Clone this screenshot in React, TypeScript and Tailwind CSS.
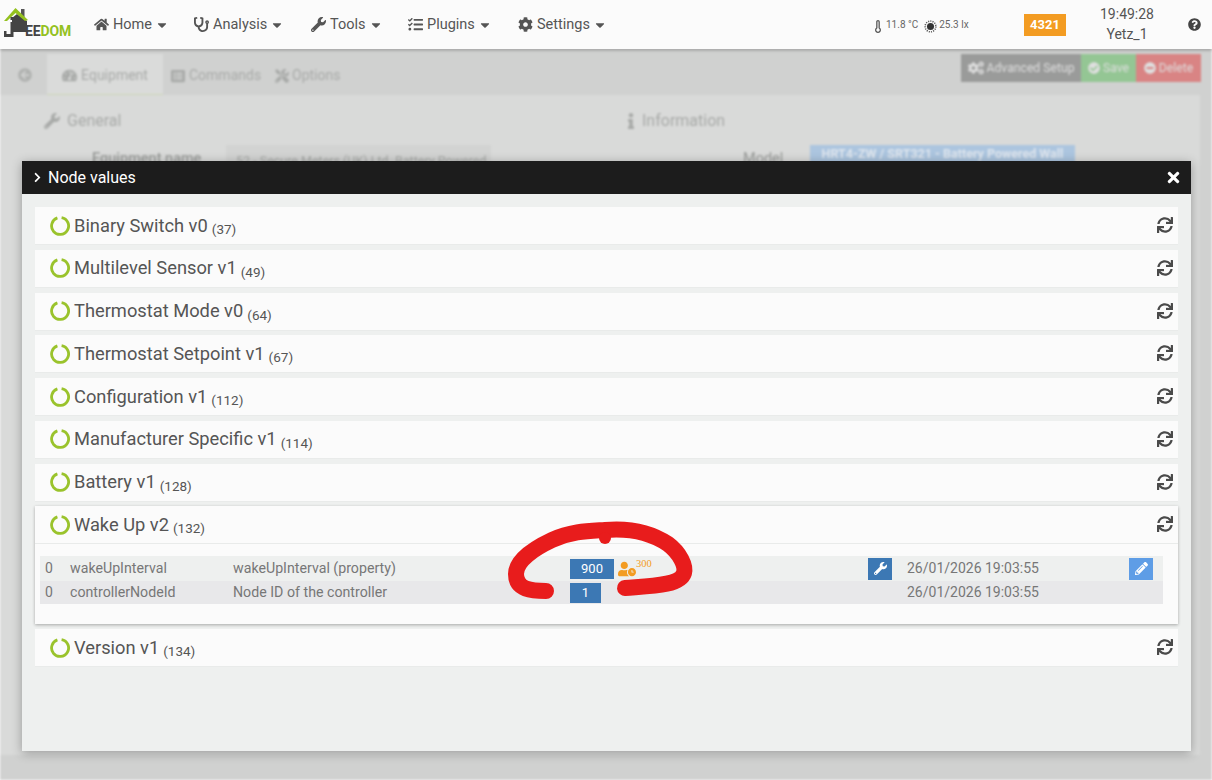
import {
  FaArrowCircleLeft,
  FaCaretDown,
  FaCheckCircle,
  FaChevronRight,
  FaCog,
  FaCogs,
  FaHome,
  FaInfo,
  FaListAlt,
  FaMinusCircle,
  FaPencilAlt,
  FaQuestionCircle,
  FaStethoscope,
  FaSync,
  FaTachometerAlt,
  FaTasks,
  FaTimes,
  FaTools,
  FaUserClock,
  FaWrench,
} from "react-icons/fa";
import { Thermometer } from "lucide-react";
import type { ComponentType, ReactNode } from "react";

const menu: { label: string; icon: ComponentType<{ className?: string }>; width: string }[] = [
  { label: "Home", icon: FaHome, width: "w-[100px]" },
  { label: "Analysis", icon: FaStethoscope, width: "w-[117px]" },
  { label: "Tools", icon: FaWrench, width: "w-[97px]" },
  { label: "Plugins", icon: FaTasks, width: "w-[110px]" },
  { label: "Settings", icon: FaCog, width: "w-[100px]" },
];

function Logo() {
  return (
    <div className="relative w-[76px] h-[40px] shrink-0">
      <svg viewBox="0 0 76 40" className="absolute -left-[5px] -top-[4px] w-[76px] h-[40px]">
        <path d="M21 8 H24.5 V17 L21 14 Z" fill="#555" />
        <path d="M12 17 L17 13 L27 20 V31 H12 Z" fill="#444" />
        <path d="M4 20 L15.5 7 L28 19 L25 20 L15.5 12 L7 20 Z" fill="#94c11f" />
        <path d="M10.5 21 H13.5 V36 H4 V30 H6.5 V33 H10.5 Z" fill="#444" />
        <rect x="10.5" y="16" width="3" height="3" fill="#444" />
      </svg>
      <span className="absolute left-[20px] top-[18px] text-[14px] leading-[16px] font-bold tracking-[-0.1px] text-[#444]">
        EE<span className="text-[#94c11f]">DOM</span>
      </span>
    </div>
  );
}

function Navbar() {
  return (
    <nav className="relative z-20 h-[49px] bg-[#fbfbfb] shadow-[0_1px_3px_rgba(0,0,0,0.35)] flex items-center pl-[5px] text-[#555]">
      <Logo />
      <ul className="flex items-center ml-[13px]">
        {menu.map(({ label, icon: Icon, width }) => (
          <li key={label} className={`flex items-center text-[14.5px] ${width}`}>
            <Icon className="text-[15px] mr-[4px] text-[#555]" />
            <span>{label}</span>
            <FaCaretDown className="text-[14px] ml-[3px]" />
          </li>
        ))}
      </ul>
      <div className="ml-[253px] flex items-center text-[10px] text-[#666] w-[153px]">
        <Thermometer className="w-[14px] h-[17px] mt-[4px] text-[#555]" strokeWidth={2.2} />
        <span className="ml-[1px] mr-[6px] -mt-[1px]">11.8 °C</span>
        <svg viewBox="0 0 14 14" className="w-[13px] h-[13px] mt-[3px] mr-[2px]">
          <circle cx="7" cy="7" r="3.8" fill="#333" />
          <circle cx="7" cy="7" r="5.8" fill="none" stroke="#555" strokeWidth="1.6" strokeDasharray="1.2 1.2" />
        </svg>
        <span className="-mt-[1px]">25.3 lx</span>
      </div>
      <div className="w-[42px] h-[22px] bg-[#f39c22] text-white text-[13px] font-bold flex items-center justify-center">
        4321
      </div>
      <div className="w-[122px] flex flex-col items-center text-[14px] leading-[20px] text-[#555] -mt-[1px]">
        <span>19:49:28</span>
        <span>Yetz_1</span>
      </div>
      <FaQuestionCircle className="text-[13px] text-[#444] -mt-[1px]" />
    </nav>
  );
}

function TopButton({ className, children }: { className: string; children: ReactNode }) {
  return (
    <div className={`h-[28px] flex items-center justify-center gap-[3px] text-[12.2px] text-[#dfdfdf] ${className}`}>
      {children}
    </div>
  );
}

function BlurredPage() {
  return (
    <div className="h-[731px] bg-[#d0d1d0] blur-[1.2px] text-[#a8aaa8] overflow-hidden">
      <div className="h-[46px] flex items-start relative">
        <div className="flex items-end h-[46px]">
          <div className="w-[47px] h-[41px] flex items-center justify-center">
            <FaArrowCircleLeft className="text-[14px] text-[#b0b2b0] ml-[2px]" />
          </div>
          <div className="w-[116px] h-[41px] pt-[2px] bg-[#dadbda] border-b border-[#cdd6b8] flex items-center justify-center gap-[4px] text-[14px]">
            <FaTachometerAlt className="text-[15px] text-[#a8aaa8]" /> Equipment
          </div>
          <div className="h-[41px] pt-[2px] flex items-center gap-[4px] pl-[8px] text-[14px] w-[112px]">
            <FaListAlt className="text-[14px]" /> Commands
          </div>
          <div className="h-[41px] pt-[2px] flex items-center gap-[3px] text-[14px]">
            <FaTools className="text-[14px]" /> Options
          </div>
        </div>
        <div className="ml-auto mr-[11px] mt-[5px] flex">
          <TopButton className="w-[120px] bg-[#9a9b9a]">
            <FaCogs className="text-[16px]" /> Advanced Setup
          </TopButton>
          <TopButton className="w-[55px] bg-[#94c694]">
            <FaCheckCircle className="text-[12px]" /> Save
          </TopButton>
          <TopButton className="w-[65px] bg-[#d98484]">
            <FaMinusCircle className="text-[12px]" /> Delete
          </TopButton>
        </div>
      </div>
      <div className="mr-[12px] h-[660px] bg-[#d9dad9] flex">
        <div className="w-[623px] pl-[44px] pt-[15px]">
          <div className="flex items-center gap-[7px] text-[16px] leading-[22px]">
            <FaWrench className="text-[16px]" /> General
          </div>
          <div className="flex items-start mt-[13px]">
            <span className="w-[182px] pl-[48px] pt-[4px] text-[14.5px] leading-[20px] font-medium text-[#9a9c9a]">Equipment name</span>
            <div className="w-[265px] h-[32px] bg-[#d2d3d2] pl-[10px] flex items-center text-[12.5px] truncate">
              52 - Secure Meters (UK) Ltd. Battery Powered
            </div>
          </div>
        </div>
        <div className="pt-[15px]">
          <div className="flex items-center gap-[3px] text-[16px] leading-[22px]">
            <FaInfo className="text-[16px]" /> Information
          </div>
          <div className="flex items-start mt-[13px] ml-[120px]">
            <span className="w-[67px] pt-[4px] text-[14.5px] leading-[20px] text-[#9a9c9a]">Model</span>
            <div className="w-[265px] h-[32px] pt-[1px] bg-[#acc5df] text-center text-[12.5px] leading-[16px] font-bold text-[#dfe6ee]">
              HRT4-ZW / SRT321 - Battery Powered Wall
            </div>
          </div>
        </div>
      </div>
    </div>
  );
}

function Ring() {
  return (
    <svg viewBox="0 0 20 20" className="w-[20px] h-[20px] shrink-0">
      <path
        d="M11.6 1.6 A8.5 8.5 0 1 1 7.4 1.9"
        fill="none"
        stroke="#9ac32c"
        strokeWidth="2.8"
      />
    </svg>
  );
}

function SectionHead({ title, id }: { title: string; id: number }) {
  return (
    <div className="h-[38px] bg-[#fbfbfb] border-b border-[#e9ebea] flex items-center pl-[15px] pr-[5px] text-[#555]">
      <Ring />
      <span className="ml-[4px] text-[18.3px] leading-[24px]">{title}</span>
      <span className="ml-[4px] text-[13.5px] leading-[18px] mt-[7px]">({id})</span>
      <FaSync className="ml-auto text-[16px] text-[#4a4a4a] -mt-[1px]" />
    </div>
  );
}

function ValueRow({
  name,
  desc,
  value,
  boxWidth,
  rowClass,
  extra,
  wrench,
  pencil,
}: {
  name: string;
  desc: string;
  value: string;
  boxWidth: string;
  rowClass: string;
  extra?: ReactNode;
  wrench?: boolean;
  pencil?: boolean;
}) {
  return (
    <div className={`grid grid-cols-[25px_163px_337px_298px_39px_222px_24px] items-center text-[14px] text-[#777] pl-[5px] ${rowClass}`}>
      <span>0</span>
      <span className="text-[14.2px]">{name}</span>
      <span className="text-[14.2px]">{desc}</span>
      <div className="flex items-center">
        <span className={`h-[20px] ${boxWidth} bg-[#3c78b4] text-white text-[13px] flex items-center justify-center`}>
          {value}
        </span>
        {extra}
      </div>
      <div>
        {wrench && (
          <span className="w-[24px] h-[22px] bg-[#3c78b4] text-white flex items-center justify-center">
            <FaWrench className="text-[13px]" />
          </span>
        )}
      </div>
      <span>26/01/2026 19:03:55</span>
      <div>
        {pencil && (
          <span className="w-[24px] h-[22px] bg-[#5e9de6] text-white flex items-center justify-center">
            <FaPencilAlt className="text-[13px]" />
          </span>
        )}
      </div>
    </div>
  );
}

const sections = [
  { title: "Binary Switch v0", id: 37 },
  { title: "Multilevel Sensor v1", id: 49 },
  { title: "Thermostat Mode v0", id: 64 },
  { title: "Thermostat Setpoint v1", id: 67 },
  { title: "Configuration v1", id: 112 },
  { title: "Manufacturer Specific v1", id: 114 },
  { title: "Battery v1", id: 128 },
];

function Dialog() {
  return (
    <div className="absolute z-10 left-[22px] top-[161px] w-[1169px] h-[590px] bg-[#eef0ef] shadow-[0_2px_10px_rgba(0,0,0,0.3)]">
      <div className="h-[33px] bg-[#1c1c1c] text-white flex items-center pl-[10px] pr-[9px]">
        <FaChevronRight className="text-[11px]" />
        <span className="ml-[5px] text-[16px]">Node values</span>
        <FaTimes className="ml-auto text-[17px]" />
      </div>
      <div className="pt-[13px] pl-[13px] pr-[13px] flex flex-col gap-[4.75px]">
        {sections.map((s) => (
          <SectionHead key={s.id} title={s.title} id={s.id} />
        ))}
        <div className="shadow-[0_1px_3px_rgba(0,0,0,0.3)]">
          <SectionHead title="Wake Up v2" id={132} />
          <div className="h-[80px] bg-[#fbfbfb] pl-[5px] pr-[15px] pt-[12px]">
            <ValueRow
              name="wakeUpInterval"
              desc="wakeUpInterval (property)"
              value="900"
              boxWidth="w-[44px]"
              rowClass="h-[25px] bg-[#eef0ef]"
              wrench
              pencil
              extra={
                <span className="flex items-start text-[#f39c22] ml-[4px]">
                  <FaUserClock className="text-[18px] mt-[1px]" />
                  <span className="text-[10.5px] font-['Liberation_Serif',serif] leading-[12px] -mt-[1px]">300</span>
                </span>
              }
            />
            <ValueRow
              name="controllerNodeId"
              desc="Node ID of the controller"
              value="1"
              boxWidth="w-[31px]"
              rowClass="h-[23px] bg-[#e8e8ea]"
            />
          </div>
        </div>
        <SectionHead title="Version v1" id={134} />
      </div>
    </div>
  );
}

export default function App() {
  return (
    <div className="relative w-[1212px] h-[780px] overflow-hidden font-['Roboto',sans-serif]">
      <Navbar />
      <BlurredPage />
      <Dialog />
      <svg viewBox="0 0 1212 780" className="absolute z-30 left-0 top-0 w-[1212px] h-[780px] pointer-events-none">
        <path
          d="M546 591 C532 591 516 590 516 574 C516 560 535 548 552 540 C572 531 590 531 605 530 C628 528 650 532 668 544 C680 553 686 566 684 573 C680 586 650 586 625 588"
          fill="none"
          stroke="#e81c1c"
          strokeWidth="16"
          strokeLinecap="round"
          strokeLinejoin="round"
        />
        <circle cx="605" cy="538" r="6" fill="#e81c1c" />
      </svg>
    </div>
  );
}
